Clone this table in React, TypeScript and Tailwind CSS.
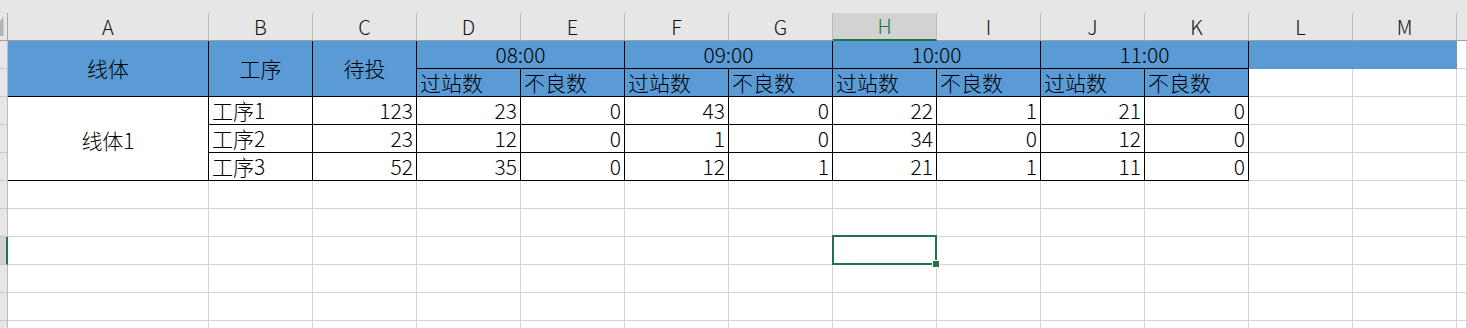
import React from 'react';

const rows: (string | number)[][] = [
  ['工序1', 123, 23, 0, 43, 0, 22, 1, 21, 0],
  ['工序2', 23, 12, 0, 1, 0, 34, 0, 12, 0],
  ['工序3', 52, 35, 0, 12, 1, 21, 1, 11, 0],
];
const letters = ['A', 'B', 'C', 'D', 'E', 'F', 'G', 'H', 'I', 'J', 'K', 'L', 'M'];
const hours = ['08:00', '09:00', '10:00', '11:00'];

// cell border styles
const grid = 'border-r border-b border-[#d4d4d4]';
const edge = 'border-r border-b border-black';
const head = 'bg-[#5b9bd5] border-r border-b border-black';

function RowHead({ active = false }: { active?: boolean }) {
  if (active) {
    return <div className="bg-[#d2d2d2] border-r-2 border-b border-r-[#217346] border-b-[#c6c6c6]" />;
  }
  return <div className="bg-[#e6e6e6] border-r border-b border-r-[#bcbcbc] border-b-[#c6c6c6]" />;
}

export default function App() {
  const emptyRows = [6, 7, 8, 9, 10, 11];

  return (
    <div className="h-[328px] w-full overflow-hidden bg-white text-black font-light font-['Noto_Sans_CJK_SC',sans-serif]">
      <div className="h-[13px] bg-[#e6e6e6]" />
      <div className="grid grid-cols-[8px_201px_repeat(12,104px)_1fr] auto-rows-[28px] text-[21px] leading-[27px]">
        {/* column letters */}
        <div className="relative bg-[#e6e6e6] border-r border-b border-r-[#a8a8a8] border-b-[#a0a0a0]">
          <svg className="absolute left-0 top-0" width="7" height="27">
            <polygon points="0,8 3.5,3.7 3.5,23 0,23" fill="#b4b4b4" />
          </svg>
        </div>
        {letters.map((l) =>
          l === 'H' ? (
            <div
              key={l}
              className="bg-[#d2d2d2] text-[#217346] text-center text-[20px] leading-[26px] border-r border-b-2 border-r-[#bcbcbc] border-b-[#217346]"
            >
              {l}
            </div>
          ) : (
            <div
              key={l}
              className="bg-[#e6e6e6] text-[#111] text-center text-[20px] leading-[27px] border-r border-b border-r-[#bcbcbc] border-b-[#a0a0a0]"
            >
              {l}
            </div>
          )
        )}
        <div className="bg-[#e6e6e6] border-b border-b-[#a0a0a0]" />

        {/* row 1 */}
        <RowHead />
        <div className={`${head} row-span-2 flex items-center justify-center`}>线体</div>
        <div className={`${head} row-span-2 flex items-center justify-center`}>工序</div>
        <div className={`${head} row-span-2 flex items-center justify-center`}>待投</div>
        {hours.map((h) => (
          <div key={h} className={`${head} col-span-2 text-center`}>
            {h}
          </div>
        ))}
        <div className="bg-[#5b9bd5] border-r border-b border-[#5b9bd5]" />
        <div className="bg-[#5b9bd5] border-r border-b border-[#5b9bd5]" />
        <div className={grid} />

        {/* row 2 */}
        <RowHead />
        {hours.map((h) => (
          <React.Fragment key={h}>
            <div className={`${head} pl-[3px] whitespace-nowrap`}>过站数</div>
            <div className={`${head} pl-[3px] whitespace-nowrap`}>不良数</div>
          </React.Fragment>
        ))}
        <div className={grid} />
        <div className={grid} />
        <div className={grid} />

        {/* data rows */}
        {rows.map((r, i) => (
          <React.Fragment key={i}>
            <RowHead />
            {i === 0 && (
              <div className={`${edge} row-span-3 flex items-center justify-center pt-1`}>线体1</div>
            )}
            <div className={`${edge} pl-[3px] whitespace-nowrap`}>{r[0]}</div>
            {r.slice(1).map((v, j) => (
              <div key={j} className={`${edge} text-right pr-[3px]`}>
                {v}
              </div>
            ))}
            <div className={grid} />
            <div className={grid} />
            <div className={grid} />
          </React.Fragment>
        ))}

        {/* empty rows */}
        {emptyRows.map((n) => (
          <React.Fragment key={n}>
            <RowHead active={n === 8} />
            {letters.map((l) =>
              n === 8 && l === 'H' ? (
                <div key={l} className={`${grid} relative`}>
                  <div className="absolute -left-[1px] -top-[2px] -right-[1px] -bottom-[1px] border-2 border-[#217346] z-10" />
                  <div className="absolute -right-[3px] -bottom-[3px] w-[6px] h-[6px] bg-[#217346] ring-1 ring-white z-20" />
                </div>
              ) : (
                <div key={l} className={grid} />
              )
            )}
            <div className={grid} />
          </React.Fragment>
        ))}
      </div>
    </div>
  );
}
